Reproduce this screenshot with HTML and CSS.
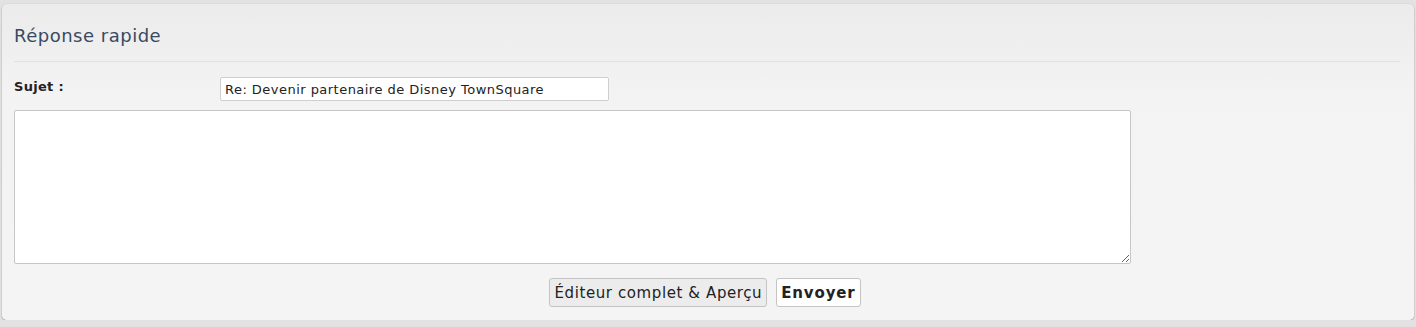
FILE: index.html
```html
<!DOCTYPE html>
<html lang="fr">
<head>
<meta charset="utf-8">
<title>Réponse rapide</title>
<link rel="stylesheet" href="styles.css">
</head>
<body>
<div class="panel">
  <h2 class="title">Réponse rapide</h2>
  <form class="form">
    <div class="row">
      <label class="label" for="subject">Sujet :</label>
      <input class="subject" id="subject" type="text" value="Re: Devenir partenaire de Disney TownSquare">
    </div>
    <textarea class="message"></textarea>
    <div class="actions">
      <button type="button" class="btn btn-preview">Éditeur complet &amp; Aperçu</button>
      <button type="button" class="btn btn-send">Envoyer</button>
    </div>
  </form>
</div>
</body>
</html>
```
FILE: styles.css
```css
html, body {
  margin: 0;
  padding: 0;
  background: #e2e2e2;
  font-family: "DejaVu Sans", Verdana, sans-serif;
}
body {
  padding: 4px 2px 0 2px;
}
.panel {
  box-sizing: border-box;
  height: 316px;
  background: linear-gradient(to bottom, #ebebeb 0px, #f3f3f3 90px, #f4f4f4 100%);
  border-radius: 5px;
  box-shadow: 0 1px 2px rgba(0,0,0,0.28), 0 0 1px rgba(0,0,0,0.12);
  padding: 20px 14px 12px 12px;
}
.title {
  margin: 0;
  font-weight: normal;
  font-size: 18px;
  line-height: 24px;
  letter-spacing: 0.5px;
  color: #3a4962;
  padding-bottom: 13px;
  border-bottom: 1px solid #e1e1e1;
}
.form {
  margin: 15px 0 0 0;
  display: flex;
  flex-direction: column;
}
.row {
  display: flex;
  align-items: flex-start;
}
.label {
  width: 206px;
  font-size: 13px;
  font-weight: bold;
  letter-spacing: 0.3px;
  color: #222;
  line-height: 16px;
  padding-top: 2px;
}
.subject {
  box-sizing: border-box;
  width: 389px;
  height: 24px;
  margin: 0;
  border: 1px solid #cfcfcf;
  border-radius: 2px;
  background: #fff;
  padding: 0 4px;
  font-family: "DejaVu Sans", Verdana, sans-serif;
  font-size: 13px;
  letter-spacing: 0.47px;
  color: #222;
}
.message {
  box-sizing: border-box;
  width: 1117px;
  height: 154px;
  margin: 9px 0 0 0;
  border: 1px solid #c6c6c6;
  border-radius: 2px;
  background: #fff;
  resize: vertical;
  font-family: "DejaVu Sans", Verdana, sans-serif;
  font-size: 13px;
}
.actions {
  display: flex;
  justify-content: center;
  gap: 9px;
  margin-top: 14px;
  padding-right: 4px;
}
.btn {
  box-sizing: border-box;
  height: 29px;
  margin: 0;
  padding: 0 4px;
  border: 1px solid #c4c4c4;
  border-radius: 3px;
  font-family: "DejaVu Sans", Verdana, sans-serif;
  font-size: 15px;
  color: #222;
}
.btn-preview {
  background: #ececec;
  letter-spacing: 0.6px;
}
.btn-send {
  background: #fff;
  font-weight: bold;
  letter-spacing: 0.85px;
}
```
